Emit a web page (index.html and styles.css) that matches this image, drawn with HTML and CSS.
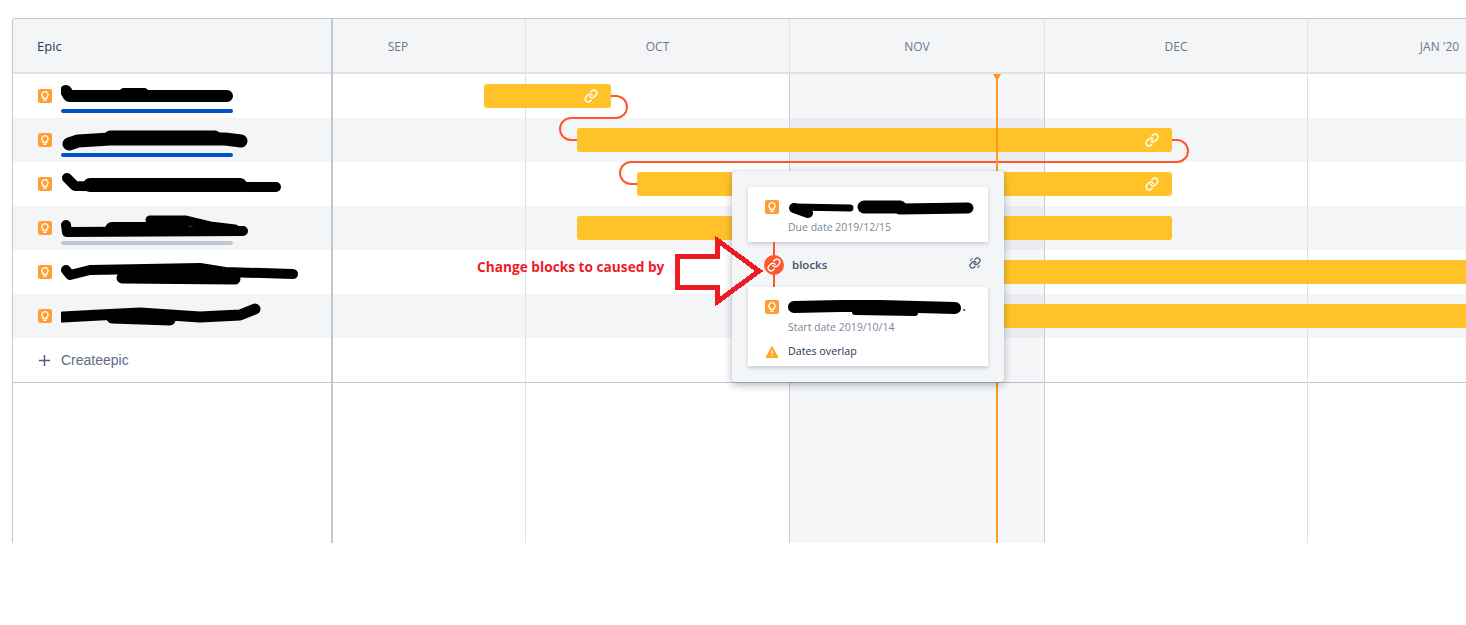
FILE: index.html
```html
<!DOCTYPE html>
<html lang="en">
<head>
  <meta charset="UTF-8">
  <meta name="viewport" content="width=device-width, initial-scale=1.0">
  <title>Roadmap</title>
  <link rel="stylesheet" href="styles.css">
</head>
<body>
  <svg class="defs" width="0" height="0">
    <symbol id="bulb" viewBox="0 0 14 14">
      <rect width="14" height="14" rx="2" fill="#ff9f33"/>
      <path d="M7 2.700a3.100 3.100 0 0 0-1.700 5.700v1.100h3.400v-1.100A3.100 3.100 0 0 0 7 2.700z" fill="none" stroke="#fff" stroke-width="1.300"/>
      <path d="M6 11.400h2" stroke="#fff" stroke-width="1.300" stroke-linecap="round"/>
    </symbol>
    <symbol id="chain" viewBox="0 0 24 24">
      <g fill="none" stroke="#fff" stroke-width="2.400" stroke-linecap="round" stroke-linejoin="round">
        <path d="M10 13a5 5 0 0 0 7.540.540l3-3a5 5 0 0 0-7.070-7.070l-1.720 1.710"/>
        <path d="M14 11a5 5 0 0 0-7.540-.540l-3 3a5 5 0 0 0 7.070 7.070l1.710-1.710"/>
      </g>
    </symbol>
  </svg>

  <div class="roadmap">
    <div class="sidebar">
      <div class="sidebar-header">Epic</div>

      <div class="epic-row">
        <svg class="icon"><use href="#bulb"/></svg>
        <svg class="scribble" viewBox="61 74 250 44">
          <path d="M66 91 L69 96 L227 96" stroke-width="12"/>
          <path d="M124 93 H144" stroke-width="10"/>
        </svg>
        <div class="progress blue"></div>
      </div>
      <div class="epic-row shaded">
        <svg class="icon"><use href="#bulb"/></svg>
        <svg class="scribble" viewBox="61 118 250 44">
          <path d="M69 144 L78 141 L110 139 L225 139 L241 141" stroke-width="13"/>
          <path d="M110 136 L215 136" stroke-width="11"/>
        </svg>
        <div class="progress blue"></div>
      </div>
      <div class="epic-row">
        <svg class="icon"><use href="#bulb"/></svg>
        <svg class="scribble" viewBox="61 162 250 44">
          <path d="M67 178 L75 186 L276 187" stroke-width="10"/>
          <path d="M90 185 H240" stroke-width="14"/>
        </svg>
      </div>
      <div class="epic-row shaded">
        <svg class="icon"><use href="#bulb"/></svg>
        <svg class="scribble" viewBox="61 206 250 44">
          <path d="M66 225 L67 232 L243 231" stroke-width="10"/>
          <path d="M112 229 L183 229" stroke-width="14"/>
          <path d="M150 220 L185 220 L210 226 L235 229" stroke-width="9"/>
        </svg>
        <div class="progress grey"></div>
      </div>
      <div class="epic-row">
        <svg class="icon"><use href="#bulb"/></svg>
        <svg class="scribble" viewBox="61 250 250 44">
          <path d="M66 270 L70 275 L90 270 L200 268 L225 272 L293 274" stroke-width="10"/>
          <path d="M122 278 L235 279" stroke-width="11"/>
          <path d="M130 272 L220 273" stroke-width="10"/>
        </svg>
      </div>
      <div class="epic-row shaded">
        <svg class="icon"><use href="#bulb"/></svg>
        <svg class="scribble" viewBox="61 294 250 44">
          <path d="M63 317 L100 315 L140 313 L200 317 L240 315 L255 309" stroke-width="11"/>
          <path d="M112 318 L170 320" stroke-width="11"/>
        </svg>
      </div>

      <div class="create-row">
        <svg class="plus" viewBox="0 0 14 14"><path d="M7 1v12M1 7h12"/></svg>
        <span>Createepic</span>
      </div>
    </div>

    <div class="timeline">
      <div class="months">
        <div class="month sep">SEP</div>
        <div class="month oct">OCT</div>
        <div class="month nov">NOV</div>
        <div class="month dec">DEC</div>
        <div class="month jan">JAN '20</div>
      </div>

      <div class="lanes">
        <div class="lane"></div>
        <div class="lane shaded"></div>
        <div class="lane"></div>
        <div class="lane shaded"></div>
        <div class="lane"></div>
        <div class="lane shaded"></div>
        <div class="lane last"></div>
      </div>

      <div class="gridlines">
        <div class="col sep"></div>
        <div class="col oct"></div>
        <div class="col nov current"></div>
        <div class="col dec"></div>
        <div class="col jan"></div>
      </div>

      <!-- page coordinates, so the numbers read straight off the screenshot -->
      <svg class="links" viewBox="333 19 1133 524">
        <path d="M611 96H616a11 11 0 0 1 0 22H571a11 11 0 0 0 0 22H577"/>
        <path d="M1172 140H1177a11 11 0 0 1 0 22H631a11 11 0 0 0 0 22H637"/>
      </svg>

      <div class="bar bar-1"><svg class="chain"><use href="#chain"/></svg></div>
      <div class="bar bar-2"><svg class="chain"><use href="#chain"/></svg></div>
      <div class="bar bar-3"><svg class="chain"><use href="#chain"/></svg></div>
      <div class="bar bar-4"></div>
      <div class="bar bar-5"></div>
      <div class="bar bar-6"></div>

      <div class="today"></div>

      <div class="popover">
        <div class="card">
          <div class="card-title">
            <svg class="icon"><use href="#bulb"/></svg>
            <svg class="scribble-sm" viewBox="788 197 190 20">
              <path d="M794 208 L808 213" stroke-width="10"/>
              <path d="M794 207 L850 208" stroke-width="7"/>
              <path d="M864 207 H900" stroke-width="13"/>
              <path d="M900 209 L968 208" stroke-width="11"/>
            </svg>
          </div>
          <div class="card-date">Due date 2019/12/15</div>
        </div>

        <div class="relation">
          <div class="relation-icon"><svg class="chain-sm"><use href="#chain"/></svg></div>
          <span class="relation-name">blocks</span>
          <svg class="unlink" viewBox="0 0 24 24">
            <g fill="none" stroke="#505f79" stroke-width="2.600" stroke-linecap="round" stroke-linejoin="round">
              <path d="M10 13a5 5 0 0 0 7.540.540l3-3a5 5 0 0 0-7.070-7.070l-1.720 1.710"/>
              <path d="M14 11a5 5 0 0 0-7.540-.540l-3 3a5 5 0 0 0 7.070 7.070l1.710-1.710"/>
              <path d="M3 6l1 .5M6 3l.5 1M21 18l-1-.5M18 21l-.5-1"/>
            </g>
          </svg>
        </div>

        <div class="card">
          <div class="card-title">
            <svg class="icon"><use href="#bulb"/></svg>
            <svg class="scribble-sm" viewBox="788 297 190 20">
              <path d="M794 307 L840 306 L880 306 L955 308" stroke-width="12"/>
              <path d="M855 312 L915 313" stroke-width="6"/>
              <path d="M964 310 h.5" stroke-width="1.500"/>
            </svg>
          </div>
          <div class="card-date">Start date 2019/10/14</div>
          <div class="overlap">
            <svg class="warning" viewBox="0 0 14 14">
              <path d="M7 1.500L13 12.500H1z" fill="#ffa726" stroke="#ffa726" stroke-linejoin="round"/>
              <path d="M7 5.500v3.500M7 10.200v1" stroke="#fff" stroke-width="1.300"/>
            </svg>
            <span>Dates overlap</span>
          </div>
        </div>
      </div>

      <div class="note">Change blocks to caused by</div>
      <svg class="note-arrow" viewBox="672 234 92 74">
        <path d="M677 256H717V240L759 271L717 302V287H677Z"/>
      </svg>
    </div>
  </div>
</body>
</html>
```

FILE: styles.css
```css
* {
  margin: 0;
  padding: 0;
  box-sizing: border-box;
}

body {
  width: 1466px;
  height: 625px;
  overflow: hidden;
  background: white;
  font-family: "Open Sans", sans-serif;
  color: #172b4d;
}

.defs {
  position: absolute;
}

.roadmap {
  display: flex;
  height: 525px;
  margin: 18px 0 0 12px;
  border-top: 1px solid #c1c7d0;
  border-left: 1px solid #c1c7d0;
  border-top-left-radius: 3px;
  overflow: hidden;
}

.sidebar {
  flex: 0 0 320px;
  border-right: 2px solid #c1c7d0;
}

.sidebar-header {
  height: 55px;
  padding-left: 24px;
  display: flex;
  align-items: center;
  font-size: 13px;
  color: #253858;
  background: #f4f5f7;
  border-bottom: 2px solid #dfe1e6;
}

.epic-row {
  position: relative;
  height: 44px;
  padding-left: 25px;
  display: flex;
  align-items: center;
  gap: 9px;
  background: white;
}

.shaded {
  background: #f4f5f7;
}

.icon {
  flex: none;
  width: 14px;
  height: 14px;
}

.scribble {
  flex: none;
  width: 250px;
  height: 44px;
}

.scribble path,
.scribble-sm path {
  fill: none;
  stroke: black;
  stroke-linecap: round;
  stroke-linejoin: round;
}

.progress {
  position: absolute;
  left: 48px;
  bottom: 5px;
  width: 172px;
  height: 4px;
  border-radius: 2px;
}

.progress.blue {
  background: #0052cc;
}

.progress.grey {
  background: #c1c7d0;
}

.create-row {
  height: 45px;
  padding-left: 25px;
  display: flex;
  align-items: center;
  gap: 10px;
  font-family: "Liberation Sans", sans-serif;
  font-size: 14px;
  color: #5e6c84;
  border-bottom: 1px solid #c1c7d0;
}

.plus {
  width: 13px;
  height: 13px;
}

.plus path {
  fill: none;
  stroke: #505f79;
  stroke-width: 1.6;
}

.timeline {
  position: relative;
  flex: 1;
  overflow: hidden;
}

.months {
  display: flex;
  height: 55px;
  background: #f4f5f7;
  border-bottom: 2px solid #dfe1e6;
}

.month {
  flex: none;
  display: flex;
  align-items: center;
  justify-content: center;
  padding-top: 1px;
  font-size: 12px;
  color: #6b778c;
  border-right: 1px solid #dfe1e6;
}

.month.sep {
  padding-right: 62px;
}

.sep {
  width: 193px;
}

.oct {
  width: 264px;
}

.nov {
  width: 255px;
}

.dec {
  width: 263px;
}

.jan {
  width: 262px;
}

.month.jan {
  padding-left: 2px;
}

.lane {
  height: 44px;
  background: white;
}

.lane.shaded {
  background: #f4f5f7;
}

.lane.last {
  height: 45px;
  border-bottom: 1px solid #c1c7d0;
}

.gridlines {
  position: absolute;
  top: 55px;
  left: 0;
  bottom: 0;
  display: flex;
}

.col {
  flex: none;
  border-right: 1px solid #dfe1e6;
}

.col.current {
  background: rgba(9, 30, 66, 0.04);
  border-right-color: #c9cdd6;
  box-shadow: -1px 0 0 #c9cdd6;
}

.links {
  position: absolute;
  top: 0;
  left: 0;
  width: 1133px;
  height: 524px;
}

.links path {
  fill: none;
  stroke: #ff5630;
  stroke-width: 2;
}

.bar {
  position: absolute;
  height: 24px;
  background: #ffc329;
  border-radius: 3px;
  display: flex;
  align-items: center;
  justify-content: flex-end;
  padding-right: 13px;
}

.bar-1 {
  left: 151px;
  top: 65px;
  width: 127px;
}

.bar-2 {
  left: 244px;
  top: 109px;
  width: 595px;
}

.bar-3 {
  left: 304px;
  top: 153px;
  width: 535px;
}

.bar-4 {
  left: 244px;
  top: 197px;
  width: 595px;
}

.bar-5 {
  left: 480px;
  top: 241px;
  width: 700px;
}

.bar-6 {
  left: 480px;
  top: 285px;
  width: 700px;
}

.chain {
  width: 14px;
  height: 14px;
  margin-top: -1px;
}

.today {
  position: absolute;
  top: 55px;
  left: 663px;
  bottom: 0;
  width: 2px;
  background: #ff991f;
}

.today:before {
  position: absolute;
  content: "";
  top: 0;
  left: -3px;
  border-top: 7px solid #ff991f;
  border-left: 4px solid transparent;
  border-right: 4px solid transparent;
}

.popover {
  position: absolute;
  left: 399px;
  top: 152px;
  width: 272px;
  padding: 16px;
  background: #f4f5f7;
  border-radius: 3px;
  box-shadow: 0 3px 8px rgba(9, 30, 66, 0.3), 0 0 1px rgba(9, 30, 66, 0.3);
}

.card {
  padding: 13px 17px 7px;
  background: white;
  box-shadow: 0 2px 4px rgba(9, 30, 66, 0.2);
}

.card-title {
  display: flex;
  align-items: center;
  gap: 9px;
  height: 14px;
}

.scribble-sm {
  flex: none;
  width: 190px;
  height: 20px;
  overflow: visible;
}

.card-date {
  margin: 6px 0 0 23px;
  font-size: 10.5px;
  line-height: 15px;
  color: #7a869a;
}

.overlap {
  display: flex;
  align-items: center;
  gap: 9px;
  margin-top: 9px;
  font-size: 10.7px;
  line-height: 15px;
  color: #253858;
}

.warning {
  flex: none;
  width: 14px;
  height: 14px;
}

.relation {
  position: relative;
  height: 45px;
  display: flex;
  align-items: center;
  padding-left: 16px;
}

.relation:before {
  position: absolute;
  content: "";
  top: 0;
  bottom: 0;
  left: 25px;
  width: 2px;
  background: #ff5630;
}

.relation-icon {
  position: relative;
  width: 20px;
  height: 20px;
  border-radius: 50%;
  background: #ff5630;
  display: flex;
  align-items: center;
  justify-content: center;
}

.chain-sm {
  width: 14px;
  height: 14px;
}

.relation-name {
  margin-left: 8px;
  font-size: 11.5px;
  font-weight: 600;
  color: #42526e;
}

.unlink {
  width: 12px;
  height: 12px;
  margin-left: auto;
  margin-right: 7px;
  margin-top: -4px;
}

.note {
  position: absolute;
  left: 144px;
  top: 239px;
  font-size: 13.7px;
  font-weight: 700;
  line-height: 18px;
  color: #ed1c24;
  white-space: nowrap;
}

.note-arrow {
  position: absolute;
  left: 339px;
  top: 215px;
  width: 92px;
  height: 74px;
  shape-rendering: crispEdges;
}

.note-arrow path {
  fill: none;
  stroke: #ed1c24;
  stroke-width: 5;
}
```
